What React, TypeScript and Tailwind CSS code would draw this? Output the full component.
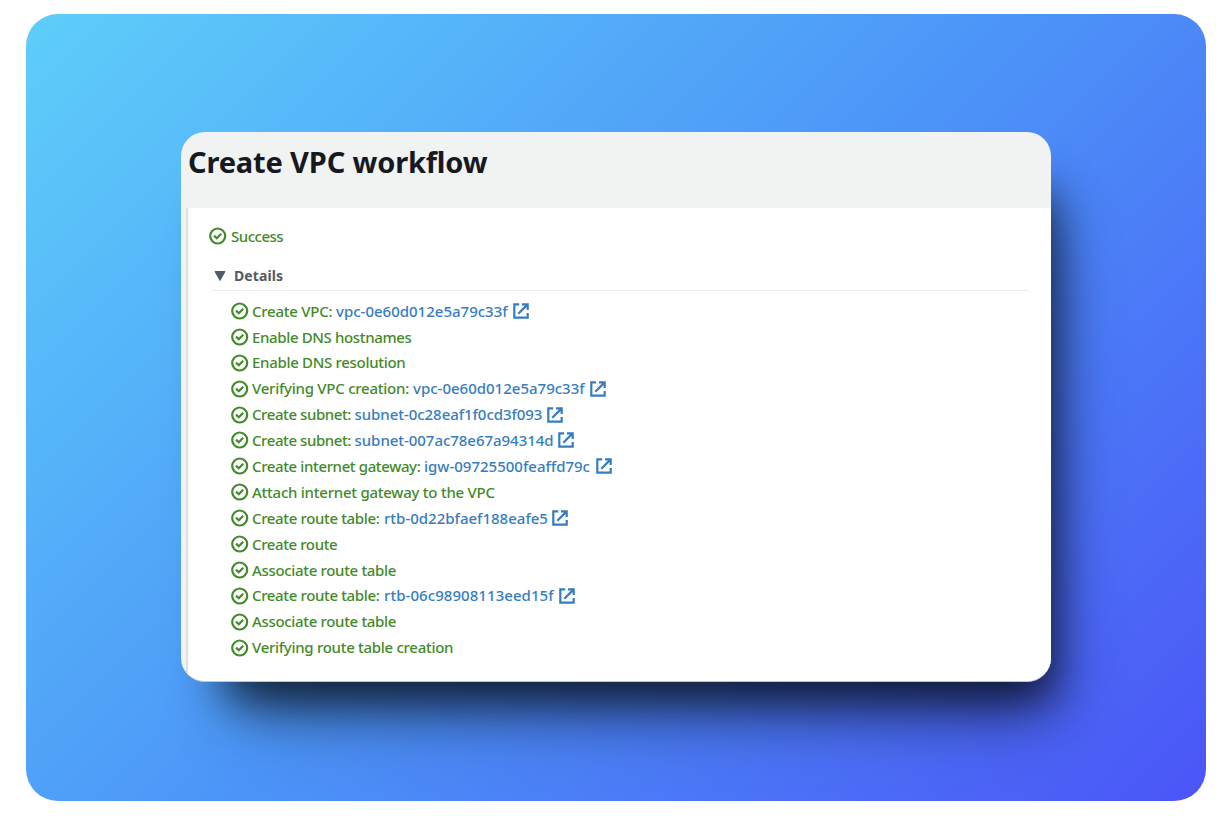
type Step = {
  label: string;
  labelClass?: string;
  link?: string;
  linkClass?: string;
};

const steps: Step[] = [
  { label: "Create VPC:", labelClass: "w-[84px] tracking-[-0.25px]", link: "vpc-0e60d012e5a79c33f", linkClass: "w-[172px]" },
  { label: "Enable DNS hostnames", labelClass: "tracking-[-0.36px]" },
  { label: "Enable DNS resolution", labelClass: "tracking-[-0.31px]" },
  { label: "Verifying VPC creation:", labelClass: "w-[161px] tracking-[-0.25px]", link: "vpc-0e60d012e5a79c33f", linkClass: "w-[172px]" },
  { label: "Create subnet:", labelClass: "w-[102.5px] tracking-[-0.42px]", link: "subnet-0c28eaf1f0cd3f093", linkClass: "w-[187.5px] tracking-[-0.05px]" },
  { label: "Create subnet:", labelClass: "w-[102.5px] tracking-[-0.42px]", link: "subnet-007ac78e67a94314d", linkClass: "w-[198.5px] tracking-[-0.04px]" },
  { label: "Create internet gateway:", labelClass: "w-[172px] tracking-[-0.38px]", link: "igw-09725500feaffd79c", linkClass: "w-[167px]" },
  { label: "Attach internet gateway to the VPC", labelClass: "tracking-[-0.25px]" },
  { label: "Create route table:", labelClass: "w-[132px] tracking-[-0.36px]", link: "rtb-0d22bfaef188eafe5", linkClass: "w-[163px]" },
  { label: "Create route", labelClass: "tracking-[-0.4px]" },
  { label: "Associate route table", labelClass: "tracking-[-0.33px]" },
  { label: "Create route table:", labelClass: "w-[132px] tracking-[-0.36px]", link: "rtb-06c98908113eed15f", linkClass: "w-[170px] tracking-[0.06px]" },
  { label: "Associate route table", labelClass: "tracking-[-0.33px]" },
  { label: "Verifying route table creation", labelClass: "tracking-[-0.29px]" },
];

function CheckIcon() {
  return (
    <svg className="size-[18px] shrink-0" viewBox="0 0 18 18" fill="none" stroke="#438a29" strokeWidth="2.2">
      <circle cx="8.7" cy="9" r="7.5" />
      <path d="M5 8.6 7.8 11.2 12.2 6.8" />
    </svg>
  );
}

function ExternalIcon() {
  return (
    <svg className="ml-[5px] size-4 shrink-0" viewBox="0 0 16 16" fill="none" stroke="#367dbf" strokeWidth="2.2">
      <path d="M6.2 1.3H1.3v13.4h13.4V10" />
      <path d="M9 1.3h5.7V7M14.4 1.6 5.3 10.7" />
    </svg>
  );
}

export default function App() {
  return (
    <div className="h-[816px] w-[1220px] bg-white pl-[26px] pt-[14px] font-['Noto_Sans',sans-serif]">
      <div className="h-[787px] w-[1180px] overflow-hidden rounded-[32px] bg-[linear-gradient(135deg,#5ecefa_0%,#4c95f8_50%,#4b55f7_100%)] pl-[155px] pt-[118px]">
        <main className="h-[550px] w-[870px] rounded-[24px] shadow-[24px_38px_44px_-22px_rgba(0,0,0,0.65),28px_60px_64px_-28px_rgba(0,0,0,0.45)]">
          <div className="flex h-full flex-col overflow-hidden rounded-[24px] border-b border-[#c3c7d0] bg-[#f1f3f3]">
            <h1 className="h-[76px] shrink-0 whitespace-nowrap pl-[7px] text-[29px] font-bold leading-[60px] tracking-[-0.15px] text-[#16191f]">
              Create VPC workflow
            </h1>
            <section className="ml-[5px] flex-1 border-l-2 border-[#e0e2e2] bg-white pl-[21px] pt-[19px]">
              <div className="flex h-[18px] items-center gap-1 text-[15px] font-medium tracking-[-0.5px] text-[#438a29]">
                <CheckIcon />
                <span>Success</span>
              </div>
              <div className="ml-[2px] mt-[16px] flex h-[30px] w-[818px] items-start border-b border-[#eceded] pt-[7px]">
                <svg className="ml-[3px] mt-[3px] h-[10px] w-[12px]" viewBox="0 0 12 10">
                  <path d="M1 .5h10L6 9.5Z" fill="#545b64" stroke="#545b64" strokeLinejoin="round" />
                </svg>
                <span className="ml-[8px] text-[14px] font-bold leading-4 tracking-[0.1px] text-[#545b64]">Details</span>
              </div>
              <ul className="ml-[22px] mt-[7px]">
                {steps.map((step, i) => (
                  <li key={i} className="flex h-[25.9px] items-center whitespace-nowrap text-[15px] font-medium text-[#438a29]">
                    <CheckIcon />
                    <span className={`ml-[3px] shrink-0 ${step.labelClass ?? ""}`}>{step.label}</span>
                    {step.link && (
                      <>
                        <a className={`shrink-0 text-[#367dbf] ${step.linkClass}`}>{step.link}</a>
                        <ExternalIcon />
                      </>
                    )}
                  </li>
                ))}
              </ul>
            </section>
          </div>
        </main>
      </div>
    </div>
  );
}
